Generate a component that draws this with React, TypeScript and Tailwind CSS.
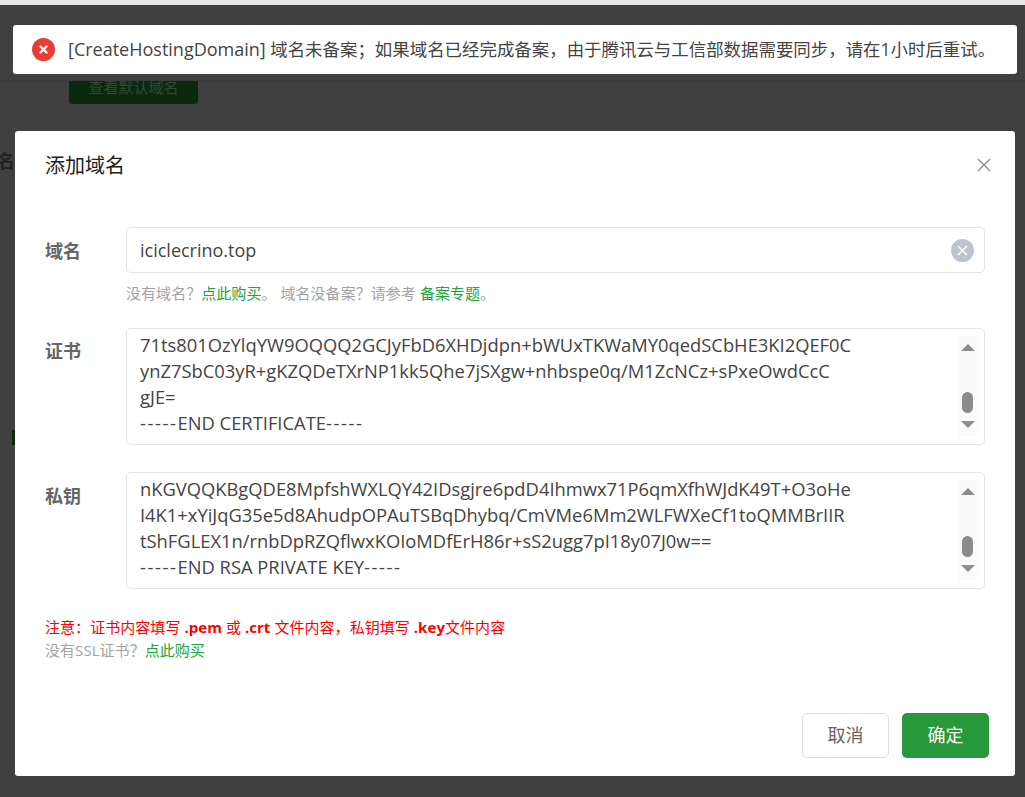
const cjk = "font-['Open_Sans','Noto_Sans_CJK_SC',sans-serif]";

function Scrollbar() {
  return (
    <div className="absolute right-[7px] top-[7px] bottom-[8px] w-[19px] bg-[#fafafa] flex flex-col items-center pt-[8px] pb-[8px]">
      <div className="w-0 h-0 border-x-[7px] border-x-transparent border-b-[7px] border-b-[#8c8c8c]" />
      <div className="w-[11px] h-[21px] rounded-full bg-[#8c8c8c] mt-auto mb-[8px]" />
      <div className="w-0 h-0 border-x-[7px] border-x-transparent border-t-[7px] border-t-[#8c8c8c]" />
    </div>
  );
}

function CodeBox({ lines, footer }: { lines: string[]; footer: string }) {
  return (
    <div className="relative flex-1 h-[117px] rounded-[5px] border border-[#e4e4e4] bg-white px-[13px] pt-[3px] overflow-hidden text-[18.35px] leading-[26px] text-[#444] whitespace-nowrap">
      {lines.map((line) => (
        <div key={line}>{line}</div>
      ))}
      <div>
        <span className="tracking-[1.6px]">-----</span>
        {footer}
        <span className="tracking-[1.6px]">-----</span>
      </div>
      <Scrollbar />
    </div>
  );
}

function Label({ text }: { text: string }) {
  return <div className="w-[81px] shrink-0 text-[18px] font-bold text-[#666] leading-[26px]">{text}</div>;
}

export default function App() {
  return (
    <div className={`relative h-[797px] overflow-hidden bg-[#404040] ${cjk}`}>
      <div className="h-[5px] bg-[#e8e8e8]" />

      {/* dimmed page behind the dialog */}
      <div className="relative z-[1] h-[76px] bg-[#404040] border-b border-[#3b3b3b]" />
      <div className="pl-[69px] -mt-[6px]">
        <div className="w-[129px] h-[29px] rounded-[3px] bg-[#0a2a10] text-[#2f4a33] text-[15px] text-center leading-[24px]">
          查看默认域名
        </div>
      </div>
      <div className="absolute left-[-3px] top-[148px] text-[18px] font-bold text-[#222]">名</div>
      <div className="absolute left-[12px] top-[430px] w-[3px] h-[15px] bg-[#0a2a10]" />
      <div className="absolute left-[1018px] top-[36px] text-[15px] text-[#222]">据</div>

      {/* toast */}
      <div className="absolute left-[13px] top-[25px] w-[1004px] h-[49px] rounded-[3px] bg-white flex items-center pl-[19px] z-10">
        <div className="w-[23px] h-[23px] rounded-full bg-[#e93c36] flex items-center justify-center">
          <svg width="11" height="11" viewBox="0 0 11 11" fill="none" stroke="white" strokeWidth="2.4" strokeLinecap="round">
            <path d="M2.5 2.5l6 6M8.5 2.5l-6 6" />
          </svg>
        </div>
        <div className="ml-[13px] text-[17.45px] text-[#444] whitespace-nowrap">
          <span className="text-[18px]">[CreateHostingDomain]</span> 域名未备案；如果域名已经完成备案，由于腾讯云与工信部数据需要同步，请在1小时后重试。
        </div>
      </div>

      {/* dialog */}
      <div className="absolute left-[15px] top-[131px] w-[1000px] h-[645px] rounded-[3px] bg-white flex flex-col z-[2]">
        <div className="flex items-center justify-between pl-[30px] pr-[24px] h-[68px]">
          <div className="text-[20px] text-[#222] mt-[2px]">添加域名</div>
          <svg className="mb-[1px]" width="14" height="14" viewBox="0 0 14 14" fill="none" stroke="#8f8f8f" strokeWidth="1.4">
            <path d="M1 1l12 12M13 1L1 13" />
          </svg>
        </div>

        <div className="pl-[30px] pr-[30px] pt-[28px] flex-1">
          <div className="flex">
            <div className="pt-[11px]">
              <Label text="域名" />
            </div>
            <div className="flex-1">
              <div className="h-[46px] rounded-[5px] border border-[#e4e4e4] flex items-center justify-between pl-[13px] pr-[10px] text-[18px] text-[#444]">
                <span>iciclecrino.top</span>
                <div className="w-[23px] h-[23px] rounded-full bg-[#bcc4d0] flex items-center justify-center">
                  <svg width="11" height="11" viewBox="0 0 11 11" fill="none" stroke="white" strokeWidth="1.5">
                    <path d="M1 1l9 9M10 1l-9 9" />
                  </svg>
                </div>
              </div>
              <div className="mt-[9px] text-[15px] leading-[22px] text-[#a3a3a3] tracking-[0.05px]">
                没有域名？<span className="text-[#20a53a]">点此购买</span>。 域名没备案？请参考 <span className="text-[#20a53a]">备案专题</span>。
              </div>
            </div>
          </div>

          <div className="flex mt-[24px]">
            <div className="pt-[10px]">
              <Label text="证书" />
            </div>
            <CodeBox
              lines={[
                "71ts801OzYlqYW9OQQQ2GCJyFbD6XHDjdpn+bWUxTKWaMY0qedSCbHE3KI2QEF0C",
                "ynZ7SbC03yR+gKZQDeTXrNP1kk5Qhe7jSXgw+nhbspe0q/M1ZcNCz+sPxeOwdCcC",
                "gJE=",
              ]}
              footer="END CERTIFICATE"
            />
          </div>

          <div className="flex mt-[27px]">
            <div className="pt-[11px]">
              <Label text="私钥" />
            </div>
            <CodeBox
              lines={[
                "nKGVQQKBgQDE8MpfshWXLQY42IDsgjre6pdD4Ihmwx71P6qmXfhWJdK49T+O3oHe",
                "I4K1+xYiJqG35e5d8AhudpOPAuTSBqDhybq/CmVMe6Mm2WLFWXeCf1toQMMBrIIR",
                "tShFGLEX1n/rnbDpRZQflwxKOIoMDfErH86r+sS2ugg7pI18y07J0w==",
              ]}
              footer="END RSA PRIVATE KEY"
            />
          </div>

          <div className="mt-[27px] text-[15px] leading-[23px] text-[#ff0000] tracking-[0.05px]">
            注意：证书内容填写 <b>.pem</b> 或 <b>.crt</b> 文件内容，私钥填写 <b>.key</b>文件内容
          </div>
          <div className="text-[15px] leading-[23px] text-[#a3a3a3] tracking-[0.05px]">
            没有SSL证书？<span className="text-[#20a53a]">点此购买</span>
          </div>
        </div>

        <div className="flex justify-end gap-[13px] pr-[26px] pb-[18px]">
          <div className="w-[87px] h-[45px] rounded-[5px] border border-[#dcdfe6] bg-white flex items-center justify-center text-[18px] text-[#666]">
            取消
          </div>
          <div className="w-[87px] h-[45px] rounded-[5px] bg-[#28993a] flex items-center justify-center text-[18px] text-white">
            确定
          </div>
        </div>
      </div>
    </div>
  );
}
